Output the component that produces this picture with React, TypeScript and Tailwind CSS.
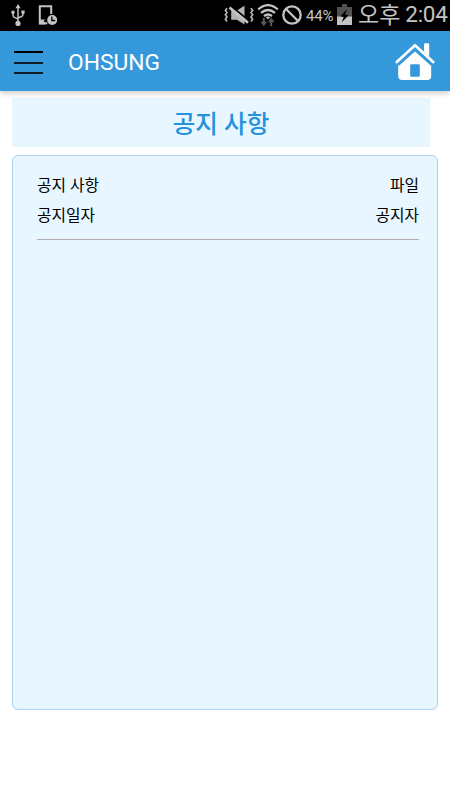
const UsbIcon = () => (
  <svg width="14" height="23" viewBox="0 0 14 23" fill="#c4c4c4" className="shrink-0">
    <path d="M7 0l2.6 4.2H4.4z" />
    <circle cx="7" cy="19.4" r="2.6" />
    <circle cx="2" cy="8.2" r="1.7" />
    <rect x="10.4" y="6.5" width="3.2" height="3.2" />
    <path d="M7 3v16M2 8v3.2Q2 13 4 13.6l3 1.6M12 8v2.6q0 1.6-2 2.2l-3 1.2" fill="none" stroke="#c4c4c4" strokeWidth="1.5" />
  </svg>
);

const DeviceIcon = () => (
  <svg width="20" height="21" viewBox="0 0 20 21" className="shrink-0">
    <path d="M13.2 9V1.3H1.8v17h7.5" fill="none" stroke="#c4c4c4" strokeWidth="2" />
    <path d="M1 14.5h6.5L5.5 16l2 2v1.5H1z" fill="#c4c4c4" />
    <circle cx="14.2" cy="15" r="5" fill="#c4c4c4" />
    <path d="M13.8 11.5v4h3.4" fill="none" stroke="#000" strokeWidth="1.3" />
  </svg>
);

const MuteIcon = () => (
  <svg width="30" height="21" viewBox="0 0 30 21" className="shrink-0">
    <path d="M7.2 5.5h5.6L20.5.8v18.6l-7.7-4.6H7.2z" fill="#b4b4b4" />
    <path d="M6.5.8L25 15.8" stroke="#000" strokeWidth="1.8" />
    <path d="M5.5 2.5L24 17.8" stroke="#c4c4c4" strokeWidth="2.6" />
    <path
      d="M3 3.2L1.4 5.4 3 7.6 1.4 9.8 3 12 1.4 14.2 3 16.4M27 3.2l1.6 2.2L27 7.6l1.6 2.2L27 12l1.6 2.2-1.6 2.2"
      fill="none"
      stroke="#b4b4b4"
      strokeWidth="1.7"
    />
  </svg>
);

const WifiIcon = () => (
  <svg width="22" height="23" viewBox="0 0 22 23" className="shrink-0">
    <path d="M1.2 5.3Q11-3 20.8 5.3M4 8.9Q11 3.2 18 8.9M7 12q4-3 8 0" fill="none" stroke="#c4c4c4" strokeWidth="2.3" />
    <path d="M8.7 13q2.3-1 4.6 0L11 15.6z" fill="#c4c4c4" />
    <path d="M7.8 13.8v4h2.4L6.8 22.2l-3.4-4.4h2.4v-4zM13.2 22.2v-4h-2.4l3.4-4.6 3.4 4.6h-2.4v4z" fill="#5a5a5a" />
  </svg>
);

const BlockedIcon = () => (
  <svg width="20" height="20" viewBox="0 0 20 20" fill="none" stroke="#c4c4c4" strokeWidth="2.3" className="shrink-0">
    <circle cx="10" cy="10" r="8.7" />
    <path d="M4 4l12 12" />
  </svg>
);

const BatteryIcon = () => (
  <svg width="15" height="21" viewBox="0 0 15 21" className="shrink-0">
    <path d="M5 0h5v3h5v18H0V3h5z" fill="#505050" />
    <path d="M0 12.5h15V21H0z" fill="#c4c4c4" />
    <path d="M10.2 5L3.4 12.2l3.3.8-2 5.2 7-7-3.6-.8z" fill="#000" />
  </svg>
);

const HomeIcon = () => (
  <svg width="40" height="39" viewBox="0 0 40 39" className="shrink-0">
    <path d="M20 4.3L3.2 20.1V34q0 4 4 4h25q4 0 4-4V20.1z" fill="#fff" />
    <path d="M2.2 21.6L20 5.6l17.8 16" fill="none" stroke="#3498db" strokeWidth="5.5" />
    <path d="M1.8 20L20 3.2 38.2 20" fill="none" stroke="#fff" strokeWidth="2.7" strokeLinecap="round" strokeLinejoin="round" />
    <path d="M30 1.2h3.2q1 0 1 1v12.2L29 9.4V2.2q0-1 1-1z" fill="#fff" />
    <rect x="15.2" y="22.2" width="9.6" height="12.6" rx="1.2" fill="#3498db" />
  </svg>
);

const notices = [
  { left: '공지 사항', right: '파일' },
  { left: '공지일자', right: '공지자' },
];

function StatusBar() {
  return (
    <div className="flex h-[31px] items-center justify-between bg-black pl-[11px] text-[#c4c4c4]">
      <div className="flex items-center gap-[13px]">
        <UsbIcon />
        <DeviceIcon />
      </div>
      <div className="flex items-center">
        <MuteIcon />
        <div className="ml-[3px] flex">
          <WifiIcon />
        </div>
        <div className="ml-[3px] flex pb-px">
          <BlockedIcon />
        </div>
        <span className="ml-[4px] w-[27px] text-[15px] leading-[30px] tracking-[-0.2px] whitespace-nowrap">44%</span>
        <div className="ml-[4px] flex pb-[2px]">
          <BatteryIcon />
        </div>
        <span className="ml-[6px] flex w-[92px] items-center text-[23px] leading-[30px] whitespace-nowrap">
          <span>오후</span>
          <span className="ml-[5px] pb-[3px] text-[22.5px] tracking-[-0.3px]">2:04</span>
        </span>
      </div>
    </div>
  );
}

function Header() {
  return (
    <header className="relative flex h-[60px] items-center bg-[#3498db] pr-[15px] pl-[14px] shadow-[0_2px_6px_rgba(0,0,0,0.22)]">
      <button className="flex h-[26px] w-[29px] flex-col justify-between pt-[3px]">
        <span className="h-[2px] w-full bg-black" />
        <span className="h-[2px] w-full bg-black/80" />
        <span className="h-[2px] w-full bg-black/80" />
      </button>
      <h1 className="ml-[25px] flex-1 pt-[3px] text-[22.8px] leading-[30px] text-white">OHSUNG</h1>
      <HomeIcon />
    </header>
  );
}

export default function App() {
  return (
    <div className="flex h-[800px] w-[450px] flex-col overflow-hidden bg-white font-[Roboto,'Noto_Sans_CJK_KR',sans-serif]">
      <StatusBar />
      <Header />

      <main className="flex flex-col pr-3 pl-3">
        <h2 className="mt-[7px] flex h-[49px] w-[418px] items-center justify-center bg-[#e8f6ff] pt-[6px] text-[24.6px] font-medium text-[#2492dc]">
          공지 사항
        </h2>

        <section className="mt-2 h-[555px] rounded-md border border-[#a9d3f1] bg-[#e8f6ff] pt-[15px] pr-[18px] pl-6">
          <div className="border-b border-[#b5acae] pb-[8px] text-[15.8px] leading-[30px] text-black">
            {notices.map((row) => (
              <div key={row.left} className="flex justify-between">
                <span>{row.left}</span>
                <span>{row.right}</span>
              </div>
            ))}
          </div>
        </section>
      </main>
    </div>
  );
}
